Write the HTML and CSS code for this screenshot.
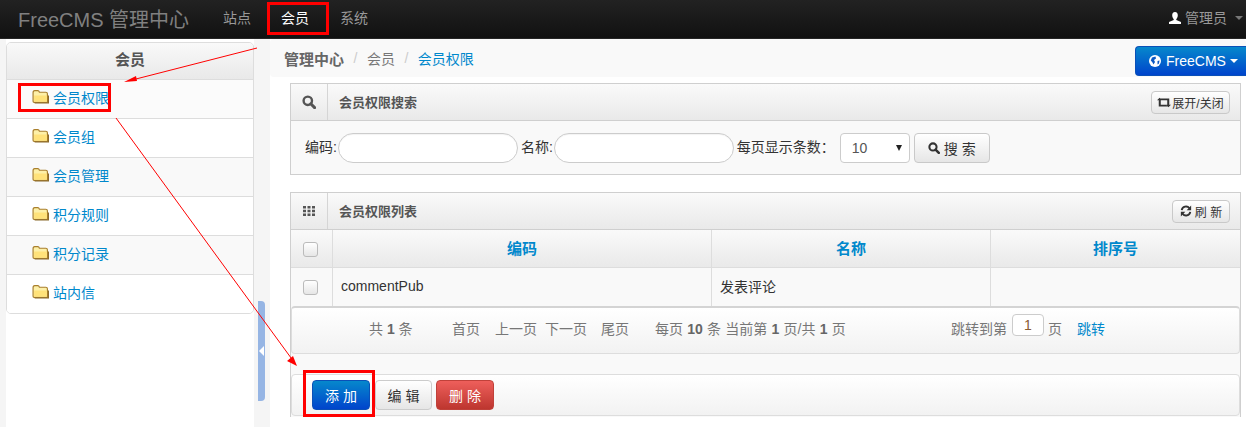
FILE: index.html
```html
<!DOCTYPE html>
<html lang="zh-CN">
<head>
<meta charset="utf-8">
<title>FreeCMS 管理中心</title>
<link rel="stylesheet" href="styles.css">
</head>
<body>
<svg width="0" height="0" class="defs">
  <defs>
    <symbol id="folder" viewBox="0 0 16 14">
      <path d="M1 3.500 Q1 1.500 2.500 1.500 L5.500 1.500 Q6.500 1.500 7 3 L13 3 Q14.500 3 14.500 4.500 L14.500 12.500 L2 12.500 Q1 12.500 1 11.500Z" fill="#fdf0a8" stroke="#a97f2c" stroke-width="1.100"/>
      <path d="M2 6 L14 6 L14 12 L2 12Z" fill="#ffe27a"/>
      <path d="M2.500 13.200 L15.500 13.200 L15.500 6" fill="none" stroke="#8a6a2c" stroke-width="1"/>
    </symbol>
    <symbol id="search" viewBox="0 0 14 14">
      <circle cx="5.800" cy="5.800" r="4.200" fill="none" stroke="currentColor" stroke-width="2.400"/>
      <path d="M8.800 8.800 L12.600 12.600" stroke="currentColor" stroke-width="3" stroke-linecap="round"/>
    </symbol>
    <symbol id="th" viewBox="0 0 12 12">
      <path fill="currentColor" d="M0 1h3v2.500H0zM4.500 1h3v2.500h-3zM9 1h3v2.500H9zM0 4.800h3v2.500H0zM4.500 4.800h3v2.500h-3zM9 4.800h3v2.500H9zM0 8.600h3v2.500H0zM4.500 8.600h3v2.500h-3zM9 8.600h3v2.500H9z"/>
    </symbol>
    <symbol id="retweet" viewBox="0 0 16 12">
      <path fill="currentColor" d="M0 3.500 L3 .5 L6 3.500 H4.300 V8.500 H10 L12 10.500 H2 V3.500Z M16 8.500 L13 11.500 L10 8.500 H11.700 V3.500 H6 L4 1.500 H14 V8.500Z"/>
    </symbol>
    <symbol id="refresh" viewBox="0 0 14 14">
      <path fill="none" stroke="currentColor" stroke-width="2.200" d="M2 6 A5 5 0 0 1 11 3.800 M12 8 A5 5 0 0 1 3 10.200"/>
      <path fill="currentColor" d="M13 .5 V6 H7.800Z M1 13.500 V8 H6.200Z"/>
    </symbol>
    <symbol id="user" viewBox="0 0 12 12">
      <path fill="currentColor" d="M6 0 C8 0 8.800 1.500 8.800 3.300 C8.800 5 8 6.500 7.300 7 L7.300 7.900 L12 10 V12 H0 V10 L4.700 7.900 L4.700 7 C4 6.500 3.200 5 3.200 3.300 C3.200 1.500 4 0 6 0Z"/>
    </symbol>
    <symbol id="globe" viewBox="0 0 12 12">
      <circle cx="6" cy="6" r="6" fill="#fff"/>
      <path fill="#0a58c4" d="M3 2.500 L6.500 1.500 L7 3.500 L5 5 L6 7 L4.500 9.500 L3.500 7.500 L1.800 5.500Z M8.500 6 L10.500 5.500 L10 8.500 L8.500 9.500Z"/>
    </symbol>
  </defs>
</svg>

<header class="navbar">
  <a class="brand">FreeCMS 管理中心</a>
  <nav class="nav-links">
    <a class="nav-link">站点</a>
    <a class="nav-link is-active">会员</a>
    <a class="nav-link">系统</a>
  </nav>
  <div class="nav-user">
    <svg class="icon-user"><use href="#user"/></svg>
    <span>管理员</span>
    <i class="caret caret-gray"></i>
  </div>
</header>

<div class="layout">
  <aside class="sidebar">
    <div class="side-panel">
      <div class="side-title">会员</div>
      <ul class="side-list">
        <li class="side-item"><svg class="icon-folder"><use href="#folder"/></svg><a>会员权限</a></li>
        <li class="side-item"><svg class="icon-folder"><use href="#folder"/></svg><a>会员组</a></li>
        <li class="side-item"><svg class="icon-folder"><use href="#folder"/></svg><a>会员管理</a></li>
        <li class="side-item"><svg class="icon-folder"><use href="#folder"/></svg><a>积分规则</a></li>
        <li class="side-item"><svg class="icon-folder"><use href="#folder"/></svg><a>积分记录</a></li>
        <li class="side-item"><svg class="icon-folder"><use href="#folder"/></svg><a>站内信</a></li>
      </ul>
    </div>
  </aside>
  <div class="gutter"></div>

  <main class="content">
    <div class="crumbs">
      <div class="crumb-trail">
        <b class="crumb-root">管理中心</b><span class="crumb-sep">/</span><span>会员</span><span class="crumb-sep">/</span><a>会员权限</a>
      </div>
      <button class="btn-site"><svg class="icon-globe"><use href="#globe"/></svg>FreeCMS<i class="caret caret-white"></i></button>
    </div>

    <section class="box box-search">
      <div class="box-head">
        <span class="box-icon"><svg class="icon-search"><use href="#search"/></svg></span>
        <h2 class="box-title">会员权限搜索</h2>
        <button class="btn btn-head btn-toggle"><svg class="icon-retweet"><use href="#retweet"/></svg>展开/关闭</button>
      </div>
      <form class="search-form">
        <label class="field-label field-first">编码:</label><input class="round-input">
        <label class="field-label field-second">名称:</label><input class="round-input">
        <label class="field-label field-third">每页显示条数：</label>
        <span class="select-wrap"><span class="select-value">10</span><i class="select-arrow"></i></span>
        <button type="button" class="btn btn-search"><svg class="icon-search-sm"><use href="#search"/></svg>搜 索</button>
      </form>
    </section>

    <section class="box box-list">
      <div class="box-head">
        <span class="box-icon"><svg class="icon-th"><use href="#th"/></svg></span>
        <h2 class="box-title">会员权限列表</h2>
        <button class="btn btn-head btn-refresh"><svg class="icon-refresh"><use href="#refresh"/></svg>刷 新</button>
      </div>
      <table class="data-table">
        <colgroup><col class="col-check"><col class="col-code"><col class="col-name"><col></colgroup>
        <thead>
          <tr><th><span class="check"></span></th><th>编码</th><th>名称</th><th>排序号</th></tr>
        </thead>
        <tbody>
          <tr><td class="cell-check"><span class="check"></span></td><td>commentPub</td><td>发表评论</td><td></td></tr>
        </tbody>
      </table>
      <div class="pager">
        <span class="pg-total">共 <b>1</b> 条</span>
        <a class="pg-first">首页</a>
        <a class="pg-prev">上一页</a>
        <a class="pg-next">下一页</a>
        <a class="pg-last">尾页</a>
        <span class="pg-info">每页 <b>10</b> 条 当前第 <b>1</b> 页/共 <b>1</b> 页</span>
        <span class="pg-jump">跳转到第</span>
        <span class="pg-input">1</span>
        <span class="pg-unit">页</span>
        <a class="pg-go">跳转</a>
      </div>
      <div class="actions">
        <button class="btn-act btn-primary">添 加</button>
        <button class="btn-act btn-default">编 辑</button>
        <button class="btn-act btn-danger">删 除</button>
      </div>
    </section>
  </main>
</div>

<div class="collapse-bar"><i class="collapse-arrow"></i></div>

<svg class="marks" width="1246" height="427" viewBox="0 0 1246 427">
  <g fill="none" stroke="#f00">
    <rect x="268.500" y="3.500" width="59" height="30" stroke-width="3"/>
    <rect x="19.500" y="84.500" width="90" height="26" stroke-width="3"/>
    <rect x="304.500" y="371.500" width="69" height="44" stroke-width="3"/>
    <path d="M257 48 L132 80"/>
    <path d="M116 118 L294 362"/>
  </g>
  <path fill="#f00" d="M124 82 L136 76 L137 81Z M297 366 L287 361 L293 356Z"/>
</svg>
</body>
</html>
```

FILE: styles.css
```css
* { box-sizing: border-box; }
html, body { margin: 0; padding: 0; }
body {
  position: relative;
  width: 1246px;
  height: 427px;
  overflow: hidden;
  background: #fff;
  font-family: "Liberation Sans", "Noto Sans CJK SC", sans-serif;
  font-size: 14px;
  color: #333;
}
a { color: #0088cc; text-decoration: none; }
ul { list-style: none; margin: 0; padding: 0; }
button { font-family: inherit; cursor: pointer; }
.defs { position: absolute; }

/* navbar */
.navbar {
  height: 39px;
  display: flex;
  align-items: center;
  padding: 0 3px 2px 18px;
  background: linear-gradient(#222222, #111111);
  border-bottom: 1px solid #252525;
}
.brand { font-size: 20px; color: #808080; width: 190px; white-space: nowrap; }
.nav-links { display: flex; flex: 1; padding-bottom: 2px; }
.nav-link { font-size: 14px; color: #999; width: 58px; text-align: center; }
.nav-link:last-child { margin-left: 1px; }
.nav-link.is-active { color: #fff; }
.nav-user { display: flex; align-items: center; color: #999; font-size: 14px; }
.nav-user span { padding-bottom: 2px; }
.icon-user { width: 12px; height: 12px; color: #fff; margin-right: 4px; }
.caret { display: inline-block; width: 0; height: 0; border-left: 4px solid transparent; border-right: 4px solid transparent; border-top: 4px solid #fff; }
.caret-gray { border-top-color: #777; margin-left: 8px; }
.caret-white { margin-left: 4px; }

/* layout */
.layout { display: flex; height: 388px; }
.sidebar { width: 254px; padding-left: 6px; background: linear-gradient(90deg, #f5f5f5 6px, #fff 6px); }
.gutter { width: 16px; background: #f5f5f5; }
.content { flex: 1; min-width: 0; }

/* side panel */
.side-panel {
  margin-top: 3px;
  border: 1px solid #ddd;
  border-radius: 5px;
  background: #fff;
  overflow: hidden;
}
.side-title {
  height: 37px;
  line-height: 33px;
  text-align: center;
  font-weight: bold;
  font-size: 15px;
  color: #555;
  background: linear-gradient(#f9f9f9, #e9e9e9);
  border-bottom: 1px solid #ddd;
}
.side-item {
  height: 39px;
  display: flex;
  align-items: center;
  padding: 0 0 5px 25px;
  border-bottom: 1px solid #ddd;
  background: #fff;
}
.side-item:nth-child(odd) { background: #f9f9f9; }
.side-item:last-child { height: 38px; border-bottom: 0; background: #fff; }
.side-item:first-child { background: #fbfbfb; }
.icon-folder { width: 17px; height: 15px; margin-right: 4px; }

/* breadcrumb */
.crumbs {
  height: 38px;
  display: flex;
  justify-content: space-between;
  background: #f9f9f9;
  border-radius: 4px;
  margin-bottom: 6px;
  padding-left: 14px;
}
.crumb-trail { display: flex; align-items: center; height: 38px; color: #777; padding-bottom: 0; }
.crumb-root { color: #666; font-size: 15px; }
.crumb-sep { color: #ccc; margin: 0 9.5px; }
.btn-site {
  align-self: flex-end;
  width: 111px;
  height: 30px;
  margin-bottom: 1px;
  padding: 0 0 0 5px;
  display: flex;
  align-items: center;
  justify-content: center;
  border: 1px solid #0a50b8;
  border-right: 0;
  border-radius: 4px 0 0 4px;
  background: linear-gradient(#0688cc, #0044cc);
  color: #fff;
  font-size: 14px;
}
.icon-globe { width: 12px; height: 12px; margin-right: 5px; }

/* boxes */
.box {
  width: 951px;
  margin-left: 20px;
  border: 1px solid #cfcfcf;
  background: #f9f9f9;
}
.box-search { height: 92px; margin-bottom: 17px; }
.box-list { height: 225px; border-bottom: 0; }
.box-head {
  height: 37px;
  display: flex;
  align-items: center;
  background: linear-gradient(#fafafa, #e9e9e9);
  border-bottom: 1px solid #cfcfcf;
  padding-right: 10px;
}
.box-icon {
  width: 37px;
  height: 36px;
  display: flex;
  align-items: center;
  justify-content: center;
  border-right: 1px solid #d5d5d5;
  color: #555;
}
.icon-search { width: 14px; height: 14px; }
.icon-th { width: 12px; height: 12px; }
.box-title { flex: 1; margin: 0 0 2px 11px; font-size: 13px; font-weight: bold; color: #555; }

.btn {
  display: inline-flex;
  align-items: center;
  justify-content: center;
  padding: 0;
  border: 1px solid #c9c9c9;
  border-radius: 4px;
  background: linear-gradient(#fff, #e6e6e6);
  color: #333;
}
.btn-head { height: 23px; font-size: 12px; }
.btn-toggle { width: 79px; }
.btn-refresh { width: 58px; }
.icon-retweet { width: 14px; height: 11px; margin-right: 1px; color: #333; }
.icon-refresh { width: 12px; height: 12px; margin-right: 3px; color: #333; }

/* search */
.search-form { display: flex; align-items: center; height: 54px; padding: 0 0 1px 14px; font-size: 14px; color: #333; }
.field-label { padding-bottom: 4px; }
.field-first { padding-right: 1px; }
.round-input {
  width: 180px;
  height: 30px;
  padding: 0 12px;
  border: 1px solid #ccc;
  border-radius: 15px;
  background: #fff;
  box-shadow: inset 0 1px 1px rgba(0,0,0,.05);
}
.field-second { margin-left: 3px; padding-right: 1px; }
.field-third { margin-left: 3px; width: 100px; white-space: nowrap; }
.select-wrap {
  width: 70px;
  height: 30px;
  margin-left: 3px;
  display: flex;
  align-items: center;
  justify-content: space-between;
  padding: 0 7px 0 11px;
  border: 1px solid #ccc;
  border-radius: 4px;
  background: #fff;
  color: #555;
}
.select-arrow { width: 0; height: 0; border-left: 3px solid transparent; border-right: 3px solid transparent; border-top: 6px solid #222; }
.btn-search { width: 76px; height: 30px; margin-left: 4px; font-size: 14px; }
.icon-search-sm { width: 12px; height: 12px; margin-right: 4px; color: #333; }

/* table */
.data-table { width: 100%; border-collapse: separate; border-spacing: 0; table-layout: fixed; }
.col-check { width: 42px; }
.col-code { width: 379px; }
.col-name { width: 279px; }
.data-table th {
  height: 38px;
  padding: 0 0 3px;
  background: linear-gradient(#fafafa, #e9e9e9);
  border-right: 1px solid #ddd;
  border-bottom: 1px solid #ddd;
  color: #0088cc;
  font-size: 15px;
  font-weight: bold;
}
.data-table th:first-child { padding: 0 3px 0 0; }
.data-table td {
  height: 38px;
  padding: 0 8px 2px;
  background: #f9f9f9;
  border-right: 1px solid #ddd;
  color: #333;
  font-size: 14px;
}
.data-table th:last-child, .data-table td:last-child { border-right: 0; }
.data-table .cell-check { padding: 0 3px 0 0; text-align: center; }
.check {
  display: inline-block;
  vertical-align: middle;
  width: 15px;
  height: 15px;
  border: 1px solid #bbb;
  border-radius: 3px;
  background: linear-gradient(#fff, #e6e6e6);
}

/* pager */
.pager {
  height: 48px;
  display: flex;
  align-items: center;
  padding: 0 0 5px 77px;
  border: 1px solid #ddd;
  border-top: 2px solid #d4d4d4;
  border-radius: 4px;
  background: linear-gradient(#fff, #f2f2f2);
  color: #777;
  font-size: 14px;
  white-space: nowrap;
}
.pager a { color: #777; }
.pager b { color: #666; }
.pager .pg-go { color: #0088cc; margin-left: 15px; }
.pg-total { width: 83px; }
.pg-first { width: 43px; }
.pg-prev { width: 50px; }
.pg-next { width: 56px; }
.pg-last { width: 54px; }
.pg-info { width: 296px; word-spacing: .35px; }
.pg-jump { width: 61px; }
.pg-input {
  width: 32px;
  height: 22px;
  margin-bottom: 7px;
  text-align: center;
  line-height: 20px;
  border: 1px solid #ccc;
  border-radius: 4px;
  background: #fff;
  color: #8a5a30;
}
.pg-unit { margin-left: 4px; }

/* actions */
.actions {
  height: 42px;
  margin-top: 20px;
  display: flex;
  align-items: center;
  gap: 4px;
  padding-left: 20px;
  border: 1px solid #ddd;
  border-radius: 4px;
  background: linear-gradient(#fff, #f2f2f2);
}
.btn-act {
  width: 58px;
  height: 30px;
  padding: 0;
  border: 1px solid #ccc;
  border-radius: 4px;
  font-size: 14px;
}
.btn-primary { background: linear-gradient(#0688cc, #0044cc); color: #fff; border-color: #0a50b8; }
.btn-default { background: linear-gradient(#fff, #e6e6e6); color: #333; width: 57px; margin-left: 1px; }
.btn-danger { background: linear-gradient(#ee5f5b, #bd362f); color: #fff; border-color: #c0413a; }

/* overlays */
.collapse-bar {
  position: absolute;
  left: 258px;
  top: 301px;
  width: 7px;
  height: 100px;
  display: flex;
  align-items: center;
  background: #96b5e4;
  border-radius: 0 4px 4px 0;
}
.collapse-arrow { width: 0; height: 0; border-top: 5px solid transparent; border-bottom: 5px solid transparent; border-right: 5px solid #fff; margin-left: 1px; }
.marks { position: absolute; left: 0; top: 0; pointer-events: none; }
```
